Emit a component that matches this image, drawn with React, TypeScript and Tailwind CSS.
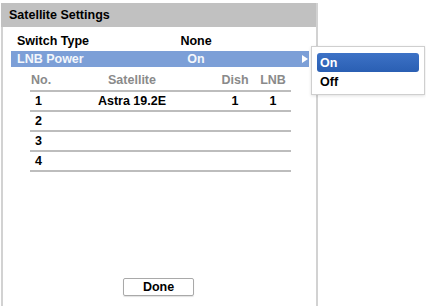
import { ReactNode } from 'react'

const rows = [
  { no: '1', satellite: 'Astra 19.2E', dish: '1', lnb: '1' },
  { no: '2', satellite: '', dish: '', lnb: '' },
  { no: '3', satellite: '', dish: '', lnb: '' },
  { no: '4', satellite: '', dish: '', lnb: '' },
]

function Cells({ no, satellite, dish, lnb, header = false }: { no: ReactNode; satellite: ReactNode; dish: ReactNode; lnb: ReactNode; header?: boolean }) {
  return (
    <>
      <div className={header ? 'w-[57px] pl-[1px]' : 'w-[57px] pl-[5px]'}>{no}</div>
      <div className="w-[90px] text-center">{satellite}</div>
      <div className="w-[40px] ml-[38px] text-center">{dish}</div>
      <div className="w-[36px] text-center">{lnb}</div>
    </>
  )
}

export default function App() {
  return (
    <div
      className="relative w-[426px] h-[306px] overflow-hidden bg-white text-[12.5px] font-bold leading-[14px] text-black"
      style={{ fontFamily: '"Liberation Sans", Arial, sans-serif' }}
    >
      {/* Settings panel */}
      <div className="ml-[1px] mt-[3px] w-[317px] h-[320px] border-l-2 border-r-2 border-[#d2d2d2] flex flex-col">
        <div className="h-[24px] bg-[#c1c1c1] flex items-center pl-[6px] -ml-[2px] pl-[8px]">Satellite Settings</div>

        <div className="mt-[6px] h-[16px] flex items-center">
          <div className="w-[150px] pl-[14px]">Switch Type</div>
          <div className="w-[86px] text-center">None</div>
        </div>

        <div className="mt-[2px] ml-[8px] w-[298px] h-[16px] bg-[#7c9fd7] text-[#f4f7fc] flex items-center">
          <div className="w-[142px] pl-[6px]">LNB Power</div>
          <div className="w-[86px] text-center">On</div>
          <div className="flex-1 flex justify-end pr-[1px]">
            <svg width="6" height="8" viewBox="0 0 6 8">
              <path d="M0 0 L6 4 L0 8 Z" fill="#ffffff" />
            </svg>
          </div>
        </div>

        {/* Table */}
        <div className="ml-[27px] w-[261px] flex flex-col">
          <div className="h-[25px] flex items-end pb-[3px] border-b-2 border-[#bdbdbd] text-[#8a8a8a]">
            <Cells header no="No." satellite="Satellite" dish="Dish" lnb="LNB" />
          </div>
          {rows.map((r) => (
            <div key={r.no} className="h-[20px] flex items-center border-b-2 border-[#bdbdbd]">
              <Cells no={r.no} satellite={r.satellite} dish={r.dish} lnb={r.lnb} />
            </div>
          ))}
        </div>

        <div className="mt-[106px] ml-[120px] w-[71px] h-[18px] border border-[#a9a9a9] rounded-[2px] shadow-[0_1px_1px_rgba(0,0,0,0.12)] flex items-center justify-center">
          Done
        </div>
      </div>

      {/* Dropdown popup */}
      <div className="absolute left-[311px] top-[46px] w-[114px] h-[49px] bg-white border border-[#cfcfcf] shadow-[0_1px_3px_rgba(0,0,0,0.12)] flex flex-col pt-[6px] px-[5px]">
        <div className="h-[19px] rounded-[3px] bg-gradient-to-b from-[#3d72c6] to-[#2a5fb3] text-white flex items-center pl-[3px]">On</div>
        <div className="h-[20px] flex items-center pl-[3px]">Off</div>
      </div>
    </div>
  )
}
